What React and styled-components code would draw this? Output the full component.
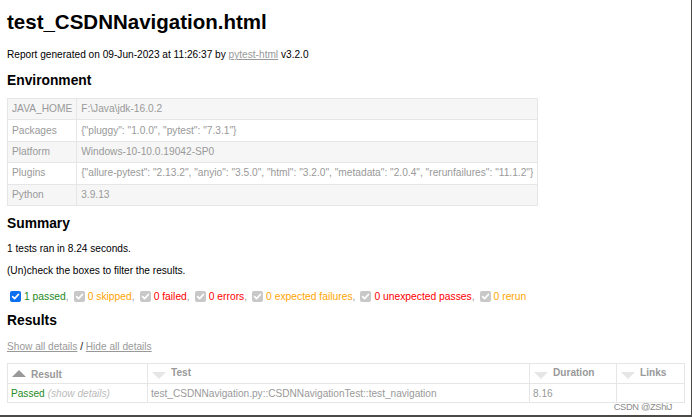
import React from "react";
import styled, { createGlobalStyle } from "styled-components";

const Global = createGlobalStyle`
  html, body { margin: 0; padding: 0; background: #4b4a47; }
  body { font-family: "Liberation Sans", Arial, Helvetica, sans-serif; }
  #root { width: 692px; height: 417px; overflow: hidden; }
`;

const Frame = styled.div`
  position: relative;
  width: 691px;
  height: 415px;
  background: #fff;
  box-sizing: border-box;
  padding: 10px 7px 0 7px;
  color: #999;
  font-size: 10.1px;
  overflow: hidden;
`;

const Title = styled.h1`
  margin: 0;
  font-size: 20.5px;
  line-height: 23px;
  font-weight: bold;
  color: #000;
`;

const Para = styled.p`
  margin: ${(p) => p.$mt ?? 10}px 0 0 0;
  font-size: 10.15px;
  line-height: 14px;
  color: #000;
`;

const Heading = styled.h2`
  margin: ${(p) => p.$mt ?? 10}px 0 0 0;
  font-size: 13.8px;
  line-height: 17px;
  font-weight: bold;
  color: #000;
`;

const Link = styled.a`
  color: #999;
  text-decoration: underline;
  cursor: pointer;
`;

const EnvTable = styled.table`
  margin-top: 9px;
  border-collapse: collapse;
  font-size: 10.2px;
  color: #999;
`;

const EnvRow = styled.tr`
  background: ${(p) => (p.$odd ? "#f6f6f6" : "#fff")};
`;

const EnvCell = styled.td`
  border: 1px solid #e6e6e6;
  padding: 0 4px;
  height: 20.4px;
  line-height: 14px;
  white-space: nowrap;
  width: ${(p) => p.$w || "auto"};
`;

const Filters = styled.div`
  margin-top: 12px;
  display: flex;
  align-items: center;
  height: 14px;
  font-size: 10.3px;
  padding-left: 3px;
`;

const FilterItem = styled.span`
  display: inline-flex;
  align-items: center;
  margin-right: 5px;
  color: #999;
`;

const Box = styled.span`
  width: 11px;
  height: 11px;
  border-radius: 2px;
  background: ${(p) => (p.$active ? "#0b6ff0" : "#c8c8c8")};
  display: inline-flex;
  align-items: center;
  justify-content: center;
  margin-right: 3px;
`;

const Label = styled.span`
  color: ${(p) => p.$c};
`;

const ResultsTable = styled.table`
  margin-top: 9px;
  width: 677px;
  border-collapse: collapse;
  font-size: 10.1px;
  color: #999;
  table-layout: fixed;
`;

const Th = styled.th`
  box-sizing: border-box;
  border: 1px solid #e6e6e6;
  height: 20.5px;
  padding: 0 4px;
  text-align: left;
  font-weight: bold;
  width: ${(p) => p.$w}px;
`;

const HeadInner = styled.span`
  display: inline-flex;
  align-items: center;
  gap: 5px;
`;

const SortIcon = styled.span`
  width: 0;
  height: 0;
  border-left: 7px solid transparent;
  border-right: 7px solid transparent;
  ${(p) =>
    p.$asc
      ? "border-bottom: 7px solid #999; margin-top: -2px;"
      : "border-top: 7px solid #e6e6e6; margin-top: 5px;"}
`;

const Td = styled.td`
  box-sizing: border-box;
  border: 1px solid #e6e6e6;
  height: 19px;
  padding: 1px 3px 0 3px;
  white-space: nowrap;
  overflow: hidden;
  color: ${(p) => p.$c || "#999"};
`;

const Expander = styled.span`
  color: #bbb;
  font-style: italic;
  margin-left: 3px;
`;

const Watermark = styled.div`
  position: absolute;
  right: 19px;
  bottom: 3px;
  font-size: 9.3px;
  color: #8a8a8a;
  text-shadow: 0 0 2px #fff, 0 0 2px #fff;
  letter-spacing: -0.35px;
`;

const Check = () => (
  <svg width="9" height="9" viewBox="0 0 10 10">
    <path d="M1.8 5.2 L4 7.4 L8.3 2.6" fill="none" stroke="#fff" strokeWidth="1.8" strokeLinecap="round" strokeLinejoin="round" />
  </svg>
);

const env = [
  ["JAVA_HOME", "F:\\Java\\jdk-16.0.2"],
  ["Packages", '{"pluggy": "1.0.0", "pytest": "7.3.1"}'],
  ["Platform", "Windows-10-10.0.19042-SP0"],
  ["Plugins", '{"allure-pytest": "2.13.2", "anyio": "3.5.0", "html": "3.2.0", "metadata": "2.0.4", "rerunfailures": "11.1.2"}'],
  ["Python", "3.9.13"],
];

const filters = [
  { label: "1 passed", c: "#1e8a1e", active: true },
  { label: "0 skipped", c: "#ffa500" },
  { label: "0 failed", c: "#ff0000" },
  { label: "0 errors", c: "#ff0000" },
  { label: "0 expected failures", c: "#ffa500" },
  { label: "0 unexpected passes", c: "#ff0000" },
  { label: "0 rerun", c: "#ffa500", last: true },
];

export default function App() {
  return (
    <>
      <Global />
      <Frame>
        <Title>test_CSDNNavigation.html</Title>
        <Para $mt={15}>
          Report generated on 09-Jun-2023 at 11:26:37 by <Link>pytest-html</Link> v3.2.0
        </Para>
        <Heading $mt={10}>Environment</Heading>
        <EnvTable>
          <tbody>
            {env.map(([k, v], i) => (
              <EnvRow key={k} $odd={i % 2 === 0}>
                <EnvCell $w="60px">{k}</EnvCell>
                <EnvCell>{v}</EnvCell>
              </EnvRow>
            ))}
          </tbody>
        </EnvTable>
        <Heading $mt={9}>Summary</Heading>
        <Para $mt={10}>1 tests ran in 8.24 seconds.</Para>
        <Para $mt={8}>(Un)check the boxes to filter the results.</Para>
        <Filters>
          {filters.map((f) => (
            <FilterItem key={f.label}>
              <Box $active={f.active}>
                <Check />
              </Box>
              <Label $c={f.c}>{f.label}</Label>
              {!f.last && ","}
            </FilterItem>
          ))}
        </Filters>
        <Heading $mt={8}>Results</Heading>
        <Para $mt={11}>
          <Link>Show all details</Link> / <Link>Hide all details</Link>
        </Para>
        <ResultsTable>
          <thead>
            <tr>
              <Th $w={140}>
                <HeadInner><SortIcon $asc />Result</HeadInner>
              </Th>
              <Th $w={382}>
                <HeadInner><SortIcon />Test</HeadInner>
              </Th>
              <Th $w={87}>
                <HeadInner><SortIcon />Duration</HeadInner>
              </Th>
              <Th $w={68}>
                <HeadInner><SortIcon />Links</HeadInner>
              </Th>
            </tr>
          </thead>
          <tbody>
            <tr>
              <Td $c="#1e8a1e">
                Passed<Expander>(show details)</Expander>
              </Td>
              <Td>test_CSDNNavigation.py::CSDNNavigationTest::test_navigation</Td>
              <Td>8.16</Td>
              <Td></Td>
            </tr>
          </tbody>
        </ResultsTable>
        <Watermark>CSDN @ZShiJ</Watermark>
      </Frame>
    </>
  );
}
